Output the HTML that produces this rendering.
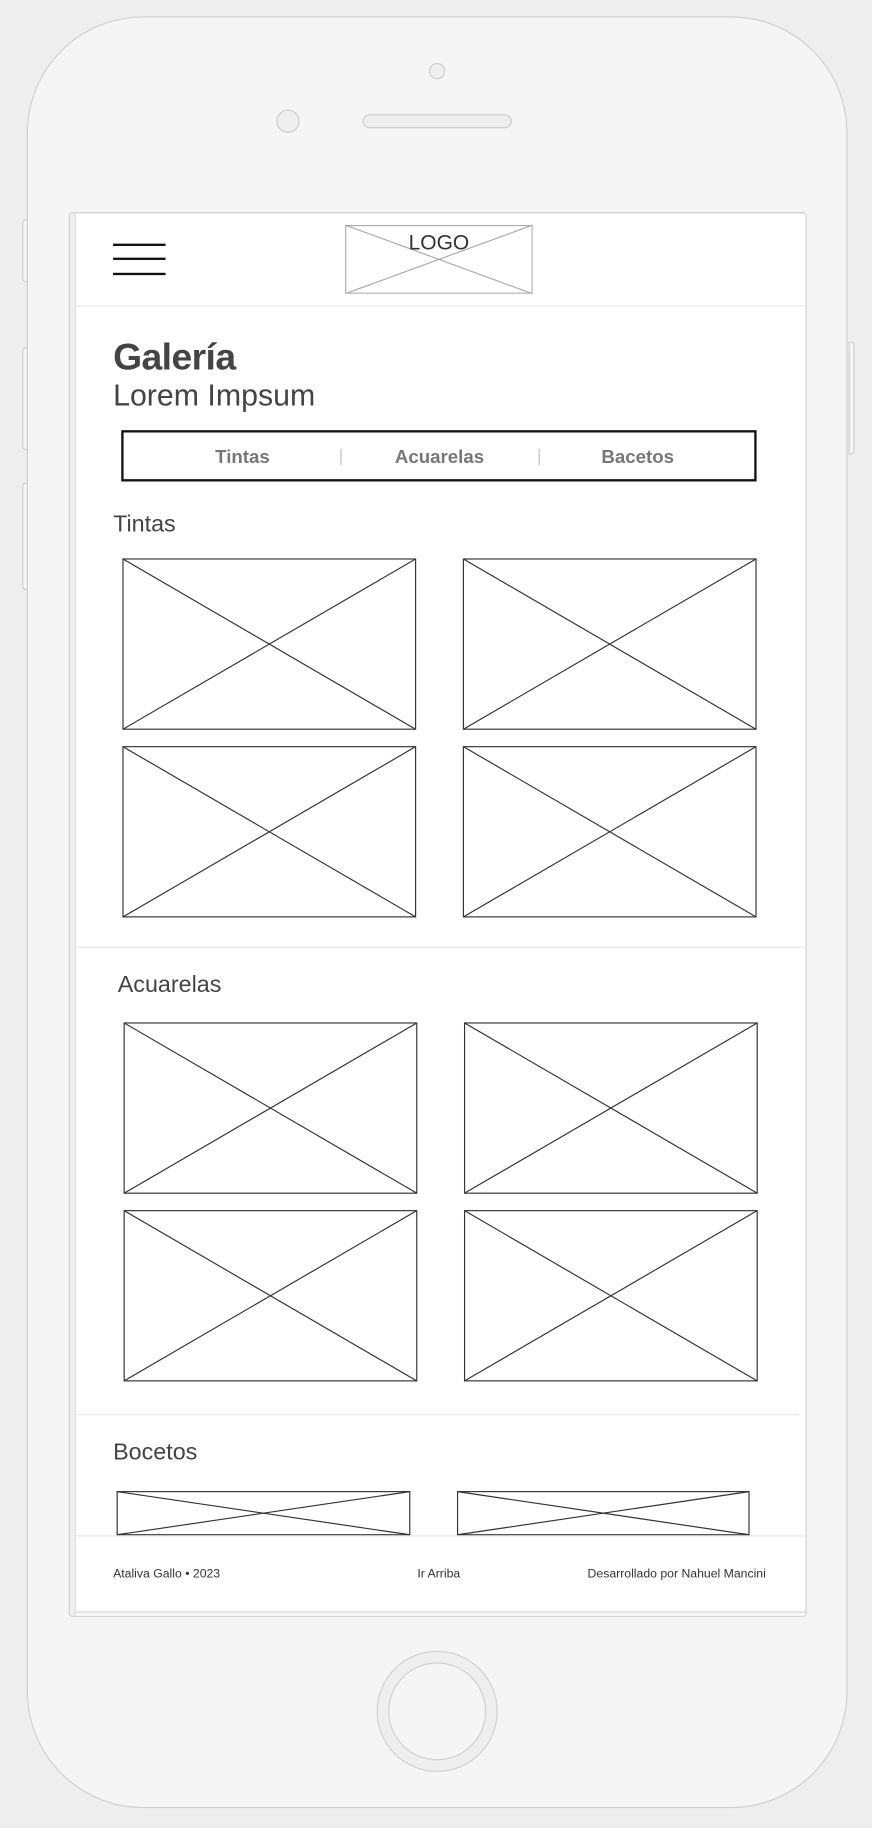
<!DOCTYPE html>
<html><head><meta charset="utf-8">
<style>
html,body{margin:0;padding:0;background:#eeeeee;width:872px;height:1828px;overflow:hidden}
#w{position:absolute;left:0;top:0;width:748px;height:1568px;transform:scale(1.16578);transform-origin:0 0;font-family:"Liberation Sans",sans-serif}
.a{position:absolute}
.ph{left:23px;top:14px;width:704px;height:1537px;background:#f5f5f5;border:1px solid #cfcfcf;border-radius:100px;box-sizing:border-box}
.btn{background:#f5f5f5;border:1px solid #cfcfcf;border-radius:3px 0 0 3px;width:5px;box-sizing:border-box}
.scr{left:59px;top:182px;width:633px;height:1205px;border:1px solid #cfcfcf;border-radius:3px;background:#fff;box-sizing:border-box;overflow:hidden}
.hr{height:1px;background:#e6e6e6}
.t{color:#444;white-space:nowrap}
.img{position:absolute}
</style></head><body>
<div id="w">
<div class="a btn" style="left:19px;top:188px;height:54px"></div>
<div class="a btn" style="left:19px;top:298px;height:88px"></div>
<div class="a btn" style="left:19px;top:414px;height:92px"></div>
<div class="a btn" style="left:728px;top:293px;height:97px;border-radius:0 3px 3px 0"></div>
<div class="a ph"></div>
<div class="a" style="left:368px;top:54px;width:14px;height:14px;border-radius:50%;background:#eee;border:1px solid #ccc;box-sizing:border-box"></div>
<div class="a" style="left:237px;top:94px;width:20px;height:20px;border-radius:50%;background:#eee;border:1px solid #ccc;box-sizing:border-box"></div>
<div class="a" style="left:311px;top:98px;width:128px;height:12px;border-radius:6px;background:#eee;border:1px solid #ccc;box-sizing:border-box"></div>
<div class="a" style="left:323px;top:1416px;width:104px;height:104px;border-radius:50%;background:#eee;border:1px solid #d0d0d0;box-sizing:border-box"></div>
<div class="a" style="left:333px;top:1426px;width:84px;height:84px;border-radius:50%;background:#f5f5f5;border:1px solid #d0d0d0;box-sizing:border-box"></div>

<div class="a scr">
 <div class="a" style="left:0;top:0;width:4px;height:100%;background:#f0f0f0;border-right:1px solid #ddd"></div>
</div>
<div class="a" style="left:59px;top:182px;width:633px;height:1205px">
 <div class="a" style="left:38px;top:27px;width:45px;height:2px;background:#111"></div>
 <div class="a" style="left:38px;top:39px;width:45px;height:2px;background:#111"></div>
 <div class="a" style="left:38px;top:52px;width:45px;height:2px;background:#111"></div>
 <svg class="img" style="left:237px;top:11px" width="161" height="59" viewBox="0 0 161 59"><rect x="0.5" y="0.5" width="160" height="58" fill="#fff" stroke="#aaa"/><line x1="0" y1="0" x2="161" y2="59" stroke="#aaa"/><line x1="161" y1="0" x2="0" y2="59" stroke="#aaa"/></svg>
 <div class="a t" style="left:237px;top:16px;width:161px;text-align:center;font-size:18px;color:#333">LOGO</div>
 <div class="a hr" style="left:5px;top:80px;width:627px"></div>
 <div class="a t" style="left:38px;top:106px;font-size:32px;font-weight:bold;letter-spacing:-0.5px">Galería</div>
 <div class="a t" style="left:38px;top:142px;font-size:26px">Lorem Impsum</div>
 <div class="a" style="left:45px;top:187px;width:545px;height:44px;border:2px solid #111;box-sizing:border-box"></div>
 <div class="a t" style="left:99px;top:202px;width:100px;text-align:center;font-size:16px;font-weight:bold;color:#777">Tintas</div>
 <div class="a" style="left:233px;top:203px;width:1px;height:14px;background:#bbb"></div>
 <div class="a t" style="left:268px;top:202px;width:100px;text-align:center;font-size:16px;font-weight:bold;color:#777">Acuarelas</div>
 <div class="a" style="left:403px;top:203px;width:1px;height:14px;background:#bbb"></div>
 <div class="a t" style="left:438px;top:202px;width:100px;text-align:center;font-size:16px;font-weight:bold;color:#777">Bacetos</div>
 <div class="a t" style="left:38px;top:257px;font-size:20px">Tintas</div>
</div>

<svg class="a" style="left:0;top:0" width="748" height="1568">
 <g fill="none" stroke="#333" stroke-width="1">
  <g id="x"><rect x="105.5" y="479.5" width="251" height="146"/><line x1="105.5" y1="479.5" x2="356.5" y2="625.5"/><line x1="356.5" y1="479.5" x2="105.5" y2="625.5"/></g>
  <use href="#x" x="292"/><use href="#x" y="161"/><use href="#x" x="292" y="161"/>
  <use href="#x" x="1" y="398"/><use href="#x" x="293" y="398"/><use href="#x" x="1" y="559"/><use href="#x" x="293" y="559"/>
  <rect x="100.5" y="1279.5" width="251" height="37"/><line x1="100.5" y1="1279.5" x2="351.5" y2="1316.5"/><line x1="351.5" y1="1279.5" x2="100.5" y2="1316.5"/>
  <rect x="392.5" y="1279.5" width="250" height="37"/><line x1="392.5" y1="1279.5" x2="642.5" y2="1316.5"/><line x1="642.5" y1="1279.5" x2="392.5" y2="1316.5"/>
 </g>
</svg>
<div class="a hr" style="left:64px;top:812px;width:627px"></div>
<div class="a t" style="left:101px;top:834px;font-size:20px">Acuarelas</div>
<div class="a hr" style="left:64px;top:1213px;width:621px"></div>
<div class="a t" style="left:97px;top:1235px;font-size:20px">Bocetos</div>
<div class="a hr" style="left:64px;top:1317px;width:627px"></div>
<div class="a t" style="left:97px;top:1344px;font-size:10.5px;color:#333">Ataliva Gallo • 2023</div>
<div class="a t" style="left:358px;top:1344px;font-size:10.5px;color:#333">Ir Arriba</div>
<div class="a t" style="left:504px;top:1344px;font-size:10.5px;color:#333">Desarrollado por Nahuel Mancini</div>
<div class="a" style="left:64px;top:1382px;width:627px;height:2px;background:#e4e4e4"></div>
</div>
</body></html>
